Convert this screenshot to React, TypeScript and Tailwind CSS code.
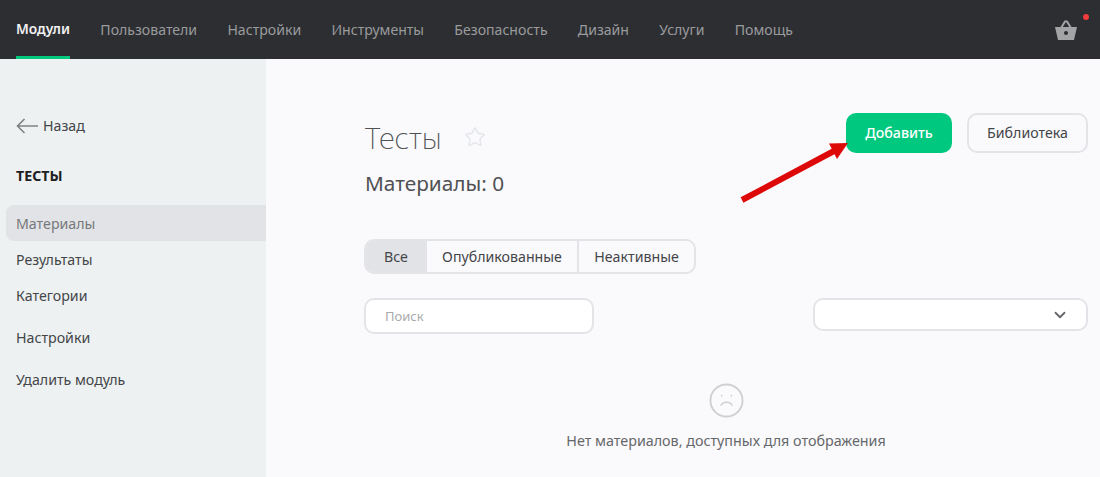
import { ChevronDown, Star } from 'lucide-react';
import React from 'react';

const navItems = ['Пользователи', 'Настройки', 'Инструменты', 'Безопасность', 'Дизайн', 'Услуги', 'Помощь'];

const Basket = () => (
  <svg width="22" height="20" viewBox="0 0 22 20" fill="none">
    <path d="M6 8 L10 1.5 H12 L16 8" stroke="#a3a4a6" strokeWidth="2" />
    <path fillRule="evenodd" clipRule="evenodd" d="M0 7 H22 L19 20 H3 Z M11 11 a2 2 0 1 0 0.01 0 Z" fill="#a3a4a6" />
  </svg>
);

const SadFace = () => (
  <svg width="35" height="35" viewBox="0 0 36 36" fill="none" stroke="#cfcfcf">
    <circle cx="18" cy="18" r="16.5" strokeWidth="1.9" />
    <circle cx="13" cy="13" r="0.9" fill="#cfcfcf" stroke="none" />
    <circle cx="23" cy="13" r="0.9" fill="#cfcfcf" stroke="none" />
    <path d="M12 23.5 C14 18.5 22 18.5 24 23.5" strokeWidth="1.4" />
  </svg>
);

const App = () => {
  return (
    <div className="flex h-[477px] w-[1100px] flex-col overflow-hidden font-['Noto_Sans',sans-serif] text-[14.2px] text-[#444548]">
      <header className="flex h-[59px] shrink-0 items-stretch justify-between bg-[#2d2e32] pl-4 pr-[23px]">
        <nav className="flex gap-[30.3px] text-[14.1px]">
          <a className="flex items-center border-b-[3px] border-[#00c97f] pt-[3px] text-[13.8px] font-semibold text-[#f1f1f1]">Модули</a>
          {navItems.map((item) => (
            <a key={item} className="flex items-center text-[#9a9b9d]">
              {item}
            </a>
          ))}
        </nav>
        <div className="relative flex items-center">
          <Basket />
          <span className="absolute right-[-12px] top-[14px] h-[6px] w-[6px] rounded-full bg-[#f53b3b]" />
        </div>
      </header>

      <div className="flex min-h-0 flex-1">
        <aside className="w-[266px] shrink-0 bg-[#edf1f2] pl-[6px] pt-[57px]">
          <a className="flex items-center gap-[5px] pl-[10px] leading-5 text-[#444548]">
            <svg width="22" height="16" viewBox="0 0 22 16" fill="none" stroke="#808184" strokeWidth="1.6">
              <path d="M22 8 H1.5 M8.5 1 L1.5 8 L8.5 15" />
            </svg>
            Назад
          </a>
          <h3 className="mt-[30px] pl-[10px] font-bold leading-5 text-[#1f2023]">ТЕСТЫ</h3>
          <ul className="mt-[19px] leading-5">
            <li className="flex h-9 items-center rounded-l-lg bg-[#e1e3e6] pl-[10px] pt-px text-[#77787b]">Материалы</li>
            <li className="flex h-9 items-center pl-[10px] pt-px">Результаты</li>
            <li className="flex h-9 items-center pl-[10px] pt-px">Категории</li>
            <li className="mt-[6px] flex h-9 items-center pl-[10px] pt-px">Настройки</li>
            <li className="mt-[6px] flex h-9 items-center pl-[10px] pt-px">Удалить модуль</li>
          </ul>
        </aside>

        <main className="relative flex-1 bg-[#fafafc] pl-[98px] pr-3 pt-[54px]">
          <div className="flex items-start justify-between">
            <div>
              <div className="flex items-center gap-[22px]">
                <h1 className="pl-px text-[29.5px] font-extralight leading-[50px] text-[#505154]">Тесты</h1>
                <Star className="mb-[2px] h-[22px] w-[22px] text-[#e2e6ea]" strokeWidth={1.5} />
              </div>
              <p className="mt-[5px] pl-px text-[20.8px] leading-[30px] text-[#505154]">Материалы: 0</p>
            </div>
            <div className="flex gap-[15px]">
              <button className="h-10 w-[106px] rounded-[10px] bg-[#00c97f] font-medium text-white">Добавить</button>
              <button className="h-10 w-[121px] rounded-[10px] border-2 border-[#e3e4e8] text-[#444548]">Библиотека</button>
            </div>
          </div>

          <div className="mt-[41px] flex h-[35px] w-[332px] overflow-hidden rounded-[10px] border-2 border-[#e3e4e8]">
            <button className="w-[61px] bg-[#e1e3e6] pr-px">Все</button>
            <button className="w-[152px] border-r-2 border-[#e3e4e8]">Опубликованные</button>
            <button className="flex-1">Неактивные</button>
          </div>

          <div className="mt-[24px] flex items-start justify-between">
            <div className="flex h-[36px] w-[230px] items-center rounded-[10px] border-2 border-[#e3e4e8] bg-white pl-[19px] pt-px text-[13px] text-[#a9aaac]">
              Поиск
            </div>
            <div className="flex h-[33px] w-[275px] items-center justify-end rounded-[10px] border-2 border-[#e3e4e8] bg-white pr-[17px]">
              <ChevronDown className="h-[18px] w-[18px] text-[#65666a]" strokeWidth={2.4} />
            </div>
          </div>

          <div className="mt-[49px] flex flex-col items-center">
            <SadFace />
            <p className="mt-[13px] text-[14.3px] leading-5 text-[#66676a]">Нет материалов, доступных для отображения</p>
          </div>

          <svg className="absolute left-[470px] top-[80px]" width="112" height="66" viewBox="0 0 112 66" fill="none">
            <path d="M6 61 L98 12" stroke="#dd0808" strokeWidth="6" />
            <path d="M112 4 L93 4.5 L101 20 Z" fill="#dd0808" />
          </svg>
        </main>
      </div>
    </div>
  );
};

export default App;
